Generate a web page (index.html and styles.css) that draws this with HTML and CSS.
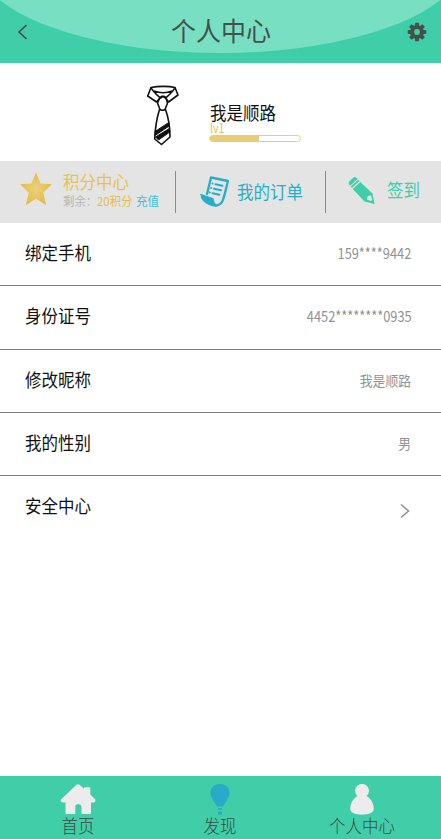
FILE: index.html
```html
<!DOCTYPE html>
<html lang="zh-CN">
<head>
<meta charset="utf-8">
<title>个人中心</title>
<link rel="stylesheet" href="styles.css">
</head>
<body>
<header class="header">
  <svg class="header-arc" width="441" height="63" viewBox="0 0 441 63"><ellipse cx="220" cy="-40" rx="244" ry="93" fill="#79dfc2"/></svg>
  <svg class="back" width="12" height="18" viewBox="0 0 12 18"><path d="M10.500 2 3 9l7.500 7" fill="none" stroke="#3f4e4b" stroke-width="1.7"/></svg>
  <h1 class="title"><span>个人中心</span></h1>
  <svg class="gear" width="20" height="20" viewBox="-10 -10 20 20">
    <g fill="#44504e"><circle r="6.8"/>
    <path id="tooth" d="M-2.300-5.500-1.800-9.300H1.800L2.300-5.500V5.500L1.800 9.300H-1.800L-2.300 5.500Z"/><use href="#tooth" transform="rotate(45)"/><use href="#tooth" transform="rotate(90)"/><use href="#tooth" transform="rotate(135)"/></g>
    <circle r="2.900" fill="#40cea8"/>
  </svg>
</header>
<section class="profile">
  <svg class="tie" width="34" height="62" viewBox="0 0 34 62" fill="none" stroke="#111" stroke-width="1.6" stroke-linejoin="round">
    <path d="M5 2.500C12 1 23 1 29 2.500L32 10 22.500 17 19.500 13 17 11.500 13.500 13.500 10.500 17 1.700 11Z"/>
    <path d="M5 2.500C7 7 11 10 14 12.500M29 2.500C27 7 23 10 20 12.500M8 6Q17 9.500 26 6"/>
    <path d="M14 12.500Q17 10 20 12.500L21.500 18 19 24.500Q16.500 26 14 24.500L11.500 18ZM13.500 24.500Q9.500 37 8.700 54L15.500 59.500 24 52Q24 37 19.500 24.500"/>
    <path d="M9 46.500 22.800 37.500 23.200 41 9 50.500ZM9.500 52 23.400 43.500 23.800 47 12.500 55Z" fill="#111" stroke-width="1"/>
  </svg>
  <div class="user">
    <div class="name"><span>我是顺路</span></div>
    <div class="level"><span>lv1</span></div>
    <div class="bar"><div class="bar-fill"></div></div>
  </div>
</section>
<nav class="shortcuts">
  <div class="cut points">
    <svg class="star" width="34" height="34" viewBox="0 0 34 34"><defs><radialGradient id="gold"><stop offset="0" stop-color="#ead080"/><stop offset="1" stop-color="#e5bb42"/></radialGradient></defs><path d="M17 .5 21.600 11.500 33 12.200 24.300 20.500 27 33 17 26.800 7 33 9.700 20.500 1 12.200 12.400 11.500Z" fill="url(#gold)"/></svg>
    <div class="points-text">
      <div class="points-title"><span>积分中心</span></div>
      <div class="points-sub"><span class="left">剩余：</span><span class="num">20积分</span><span class="charge">充值</span></div>
    </div>
  </div>
  <div class="cut orders">
    <svg class="scroll" width="30" height="32" viewBox="0 0 30 32" fill="none" stroke="#28adc8" stroke-linejoin="round" stroke-linecap="round">
      <path d="M7 18 11 1.500 28 5C26 12 25 19 22.500 25Q20.500 29 16 29.500" stroke-width="2.300"/>
      <path d="M1 18.500 13 22.500Q13.500 27 17 30 12 30.800 7 27.500 1 24.500 1 18.500Z" fill="#28adc8" stroke-width="1"/>
      <path d="M15.500 8.300 22.500 9.800M14 12.700 21 14.200M12.500 17.200 19.500 18.700" stroke-width="2"/>
      <path d="M12.400 7.600h.1M11.100 12h.1M9.600 16.500h.1" stroke-width="2"/>
    </svg>
    <span class="cut-label">我的订单</span>
  </div>
  <div class="cut sign">
    <svg class="pencil" width="27" height="29" viewBox="0 0 27 29"><g fill="#40cea8"><path d="M5.500 1.500Q7 .3 8.500 1.800L9.600 3 2 9.700.9 8.300Q0 7 1.300 5.600ZM10.300 3.800 11.500 5.100 3.900 11.900 2.700 10.500Z"/><path fill-rule="evenodd" d="M12.300 6 24.500 17.500 26.500 28 16.500 25.500 4.800 12.900ZM23 19.500 19.800 20 18.800 23.500 23 25 24.200 24Z"/></g></svg>
    <span class="cut-label">签到</span>
  </div>
</nav>
<main class="list">
  <div class="row"><span class="label">绑定手机</span><span class="value digits">159****9442</span></div>
  <div class="row tall"><span class="label">身份证号</span><span class="value digits">4452********0935</span></div>
  <div class="row"><span class="label">修改昵称</span><span class="value">我是顺路</span></div>
  <div class="row"><span class="label">我的性别</span><span class="value">男</span></div>
  <div class="row last"><span class="label">安全中心</span><svg class="more" width="11" height="16" viewBox="0 0 11 16"><path d="M1 1.500 8.500 8 1 14.500" fill="none" stroke="#929292" stroke-width="1.600"/></svg></div>
</main>
<footer class="tabs">
  <div class="tab home">
    <svg width="36" height="31" viewBox="0 0 36 31"><path d="M16.500 .8Q18 -.3 19.500 .8L24 4.800V4Q24 3.200 24.800 3.200H29.500Q30.300 3.200 30.300 4V10.500L35.300 15.500Q36 18.500 33.500 18.500H31V29Q31 30 30 30H21.500V22.500Q21 20 18.300 20 15.500 20 15.300 22.500V30H6.500Q5.500 30 5.500 29V18.500H2.500Q0 18 1 15.500Z" fill="#ececec"/></svg>
    <span>首页</span>
  </div>
  <div class="tab discover">
    <svg width="20" height="31" viewBox="0 0 20 31"><path d="M10 0C16 0 19.700 4 19.700 9 19.700 13 15.500 18 13 22.500H7C4.500 18 .3 13 .3 9 .3 4 4 0 10 0ZM8 24H12L11.500 26H8.500ZM8 27.500H12V30.500H8Z" fill="#28aac8"/></svg>
    <span>发现</span>
  </div>
  <div class="tab mine">
    <svg width="24" height="31" viewBox="0 0 24 31"><path d="M12 0A6.800 6.800 0 0 1 16.500 12C21 14.500 23.700 19 23.700 25 23.700 29 18 30.700 12 30.700S.3 29 .3 25C.3 19 3 14.500 7.500 12A6.800 6.800 0 0 1 12 0Z" fill="#ececec"/></svg>
    <span>个人中心</span>
  </div>
</footer>
</body>
</html>
```
FILE: styles.css
```css
* { box-sizing: border-box; }
body {
  margin: 0;
  width: 441px;
  height: 839px;
  display: flex;
  flex-direction: column;
  overflow: hidden;
  background: #fff;
  color: #111;
  font-family: "Noto Sans CJK SC", sans-serif;
}
svg { display: block; flex: none; }
span { display: inline-block; white-space: nowrap; }

.header {
  position: relative;
  height: 63px;
  flex: none;
  display: flex;
  justify-content: space-between;
  padding: 0 14px 0 16px;
  background: #40cea8;
}
.header-arc { position: absolute; left: 0; top: 0; }
.back, .title, .gear { position: relative; }
.back { margin-top: 23px; }
.gear { margin-top: 22px; }
.title {
  margin: 0;
  padding-left: 7px;
  font-size: 26px;
  line-height: 59px;
  font-weight: 400;
  color: #44504e;
}
.title span { transform: scaleX(.96); }

.profile {
  height: 98px;
  flex: none;
  display: flex;
  padding: 22px 0 0 146px;
}
.user { margin-left: 29px; width: 93px; padding-top: 16px; }
.name { height: 22px; font-size: 18px; line-height: 22px; padding-left: 1px; }
.name span { transform: scaleX(.915); transform-origin: left; }
.level { height: 11px; font-size: 13px; line-height: 9px; padding-left: 1px; color: #e6c253; }
.level span { transform: scaleX(.82); transform-origin: left; }
.bar { height: 7px; margin-top: 1px; width: 92px; border: 1px solid #e9cd75; border-radius: 4px; overflow: hidden; }
.bar-fill { width: 49px; height: 5px; background: #e9cd75; }

.shortcuts { height: 62px; flex: none; display: flex; background: #e4e4e4; align-items: flex-start; padding-top: 10px; }
.cut { height: 42px; display: flex; border-right: 1px solid #8a8a8a; }
.points { width: 176px; padding-left: 19px; }
.star { margin-top: 1px; }
.points-text { margin-left: 10px; }
.points-title { font-size: 18px; line-height: 20px; height: 22px; color: #e6c253; }
.points-title span { transform: scaleX(.915); transform-origin: left; }
.points-sub { display: flex; font-size: 12px; line-height: 16px; height: 16px; }
.points-sub span { transform-origin: left; }
.left { width: 34px; color: #b5b5b5; transform: scaleX(.95); }
.num { width: 39px; color: #e6bd48; transform: scaleX(.95); }
.charge { color: #45bed6; transform: scaleX(.96); }
.orders { width: 150px; padding-left: 24px; }
.scroll { margin-top: 5px; }
.cut-label { font-size: 18px; line-height: 22px; transform: scaleX(.915); transform-origin: left; }
.orders .cut-label { margin: 9px 0 0 6.500px; color: #28adc8; }
.sign { width: 115px; border: 0; padding-left: 22px; }
.pencil { margin-top: 5px; }
.sign .cut-label { margin: 7px 0 0 11.500px; color: #40cea8; }

.list { flex: 1; }
.row {
  height: 63px;
  display: flex;
  justify-content: space-between;
  align-items: center;
  padding: 0 30px 2px 24.500px;
  border-bottom: 1px solid #7b7b7b;
}
.row.tall { height: 64px; }
.row.last { border: 0; }
.label { margin-top: -2px; font-size: 18px; line-height: 24px; transform: scaleX(.915); transform-origin: left; }
.tall .label { margin-top: -4px; }
.last .label { margin-top: -4px; }
.value { margin-top: -1px; font-size: 14px; line-height: 20px; color: #929292; transform: scaleX(.915); transform-origin: right; }
.digits { margin-right: -.5px; font-size: 15px; transform: scaleX(.855); }
.more { margin: 8px 0 0; }

.tabs { height: 63px; flex: none; background: #40cea8; display: flex; padding: 8px 8px 0 7px; }
.tab { width: 142px; display: flex; flex-direction: column; align-items: center; }
.tab span { font-size: 18px; line-height: 20px; font-weight: 300; color: #3b4845; transform: scaleX(.915); }
```
